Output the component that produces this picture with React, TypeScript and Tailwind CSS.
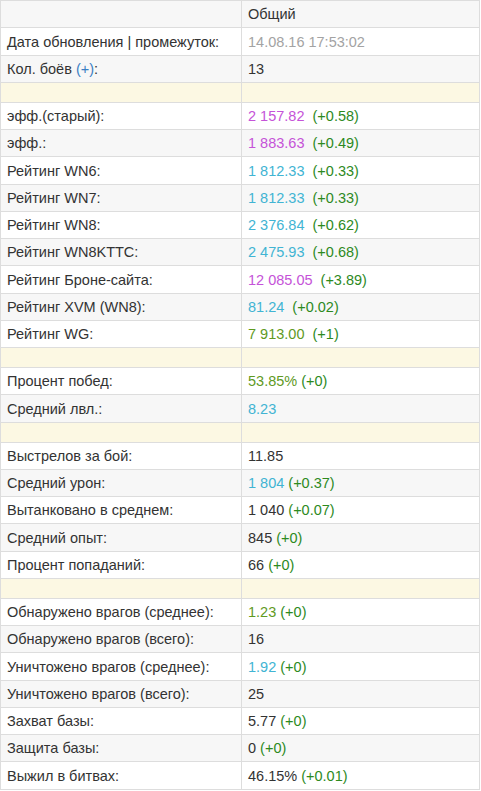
import React from 'react';

type Part = { text: string; color?: string };
type Row = { label: React.ReactNode; value?: Part[]; spacer?: boolean };

const purple = 'text-[#c553d8]';
const cyan = 'text-[#41b4d3]';
const olive = 'text-[#5f9a1f]';
const delta = 'text-[#2d8a1e]';

const v = (main: string, mainColor: string, d?: string, gap = true): Part[] =>
  d ? [{ text: main, color: mainColor }, { text: gap ? '\u00a0 ' : ' ', color: '' }, { text: d, color: delta }] : [{ text: main, color: mainColor }];

const sections: Row[][] = [
  [
    { label: 'Дата обновления | промежуток:', value: [{ text: '14.08.16 17:53:02', color: 'text-[#a3a3a3]' }] },
    {
      label: (
        <>
          Кол. боёв <span className="text-[#3b7fc3]">(+)</span>:
        </>
      ),
      value: [{ text: '13' }],
    },
  ],
  [
    { label: '', spacer: true },
    { label: 'эфф.(старый):', value: v('2 157.82', purple, '(+0.58)') },
    { label: 'эфф.:', value: v('1 883.63', purple, '(+0.49)') },
    { label: 'Рейтинг WN6:', value: v('1 812.33', cyan, '(+0.33)') },
    { label: 'Рейтинг WN7:', value: v('1 812.33', cyan, '(+0.33)') },
    { label: 'Рейтинг WN8:', value: v('2 376.84', cyan, '(+0.62)') },
    { label: 'Рейтинг WN8KTTC:', value: v('2 475.93', cyan, '(+0.68)') },
    { label: 'Рейтинг Броне-сайта:', value: v('12 085.05', purple, '(+3.89)') },
    { label: 'Рейтинг XVM (WN8):', value: v('81.24', cyan, '(+0.02)') },
    { label: 'Рейтинг WG:', value: v('7 913.00', olive, '(+1)') },
  ],
  [
    { label: '', spacer: true },
    { label: 'Процент побед:', value: v('53.85%', olive, '(+0)', false) },
    { label: 'Средний лвл.:', value: [{ text: '8.23', color: cyan }] },
  ],
  [
    { label: '', spacer: true },
    { label: 'Выстрелов за бой:', value: [{ text: '11.85' }] },
    { label: 'Средний урон:', value: v('1 804', cyan, '(+0.37)', false) },
    { label: 'Вытанковано в среднем:', value: v('1 040', '', '(+0.07)', false) },
    { label: 'Средний опыт:', value: v('845', '', '(+0)', false) },
    { label: 'Процент попаданий:', value: v('66', '', '(+0)', false) },
  ],
  [
    { label: '', spacer: true },
    { label: 'Обнаружено врагов (среднее):', value: v('1.23', olive, '(+0)', false) },
    { label: 'Обнаружено врагов (всего):', value: [{ text: '16' }] },
    { label: 'Уничтожено врагов (среднее):', value: v('1.92', cyan, '(+0)', false) },
    { label: 'Уничтожено врагов (всего):', value: [{ text: '25' }] },
    { label: 'Захват базы:', value: v('5.77', '', '(+0)', false) },
    { label: 'Защита базы:', value: v('0', '', '(+0)', false) },
    { label: 'Выжил в битвах:', value: v('46.15%', '', '(+0.01)', false) },
  ],
];

export default function App() {
  return (
    <div className="w-[481px] bg-white font-['Liberation_Sans',Arial,sans-serif] text-[14.5px] text-[#333]">
      <table className="w-[480px] table-fixed border-collapse border border-[#ddd]">
        <colgroup>
          <col className="w-[241px]" />
          <col />
        </colgroup>
        <tbody>
          <tr className="h-[27.25px] bg-[#f7f7f7]">
            <td className="border border-[#ddd] px-[6px] pt-[2px]" />
            <td className="border border-[#ddd] px-[6px] pt-[2px]">Общий</td>
          </tr>
        </tbody>
        {sections.map((rows, si) => (
          <tbody key={si}>
            {rows.map((row, ri) => {
              if (row.spacer) {
                return (
                  <tr key={ri} className="h-[20px] bg-[#fcf8e3]">
                    <td className="border border-[#ddd]" />
                    <td className="border border-[#ddd]" />
                  </tr>
                );
              }
              const shaded = si === 0 ? ri % 2 === 1 : ri % 2 === 0;
              return (
                <tr key={ri} className={`h-[27.25px] ${shaded ? 'bg-[#f7f7f7]' : 'bg-white'}`}>
                  <td className="border border-[#ddd] px-[6px] pt-[2px] whitespace-nowrap">{row.label}</td>
                  <td className="border border-[#ddd] px-[6px] pt-[2px] whitespace-nowrap">
                    {row.value?.map((p, i) => (
                      <span key={i} className={p.color}>
                        {p.text}
                      </span>
                    ))}
                  </td>
                </tr>
              );
            })}
          </tbody>
        ))}
      </table>
    </div>
  );
}
